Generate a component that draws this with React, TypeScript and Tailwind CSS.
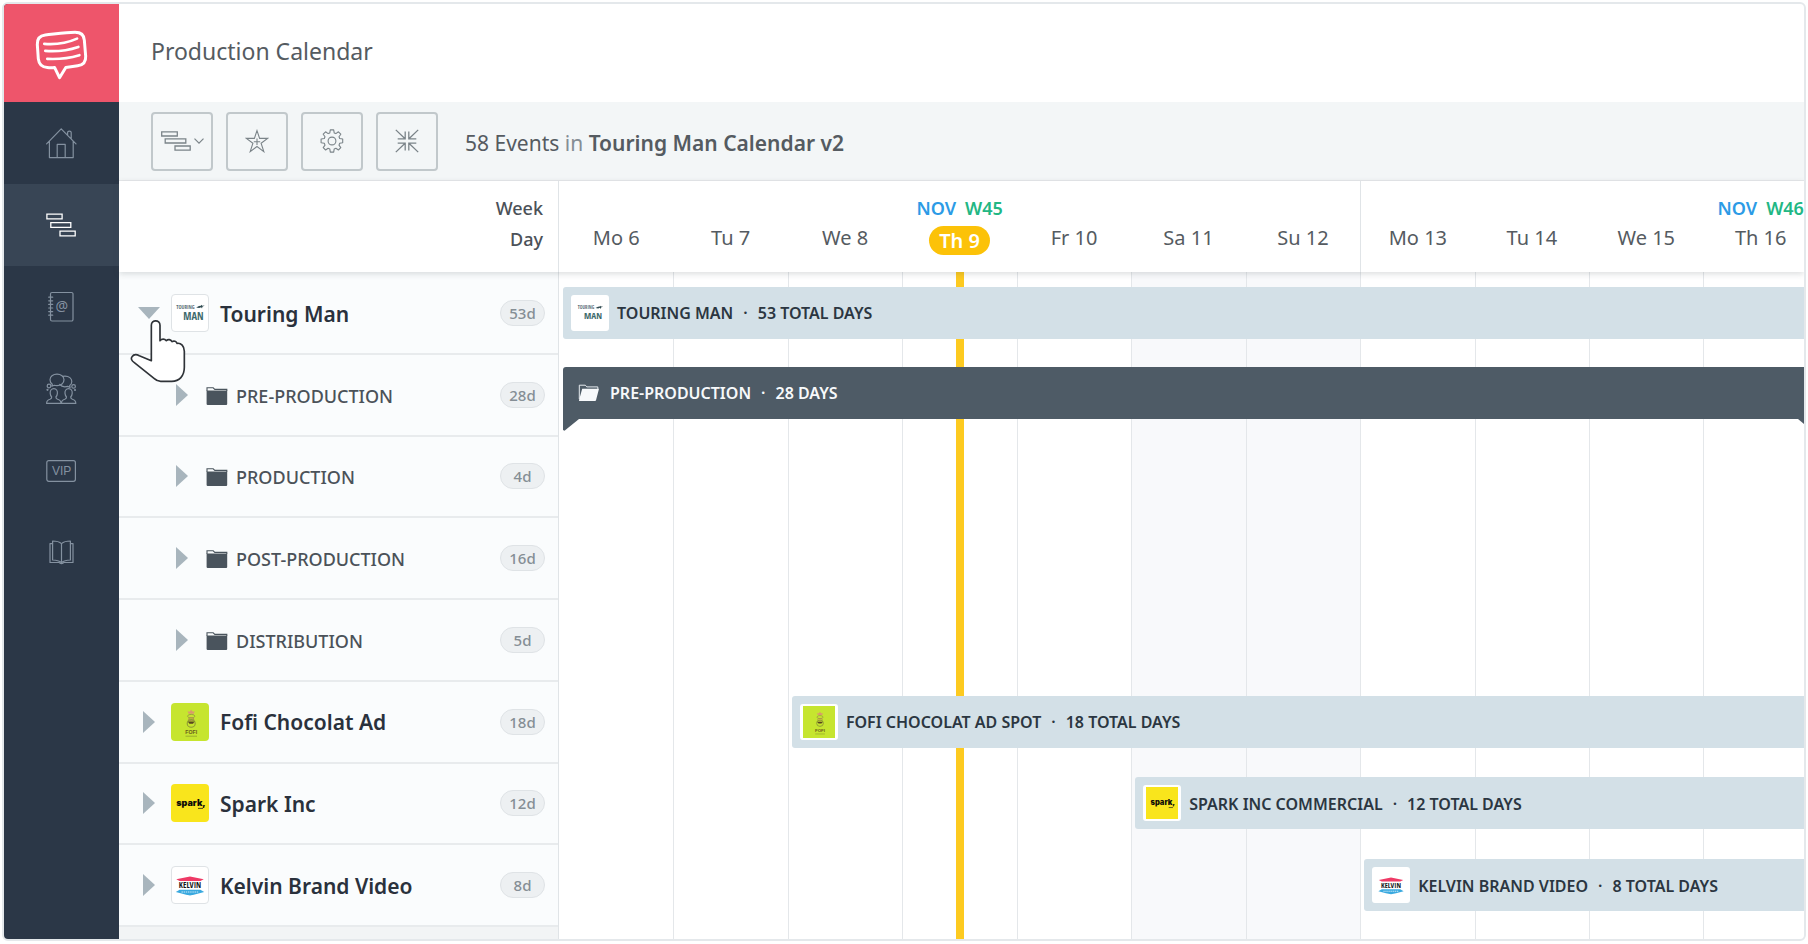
import type { ReactNode } from 'react';

type Brand = 'touring' | 'fofi' | 'spark' | 'kelvin';

const NARROW = '"Liberation Sans Narrow", "Open Sans Condensed", "Roboto Condensed", "DejaVu Sans Condensed", sans-serif';

const days = ['Mo 6', 'Tu 7', 'We 8', 'Th 9', 'Fr 10', 'Sa 11', 'Su 12', 'Mo 13', 'Tu 14', 'We 15', 'Th 16'];
const weeks: Record<string, string> = { 'Th 9': 'W45', 'Th 16': 'W46' };
const today = 'Th 9';

const rows: { name: string; total: string; brand?: Brand; open?: boolean }[] = [
  { name: 'Touring Man', total: '53d', brand: 'touring', open: true },
  { name: 'PRE-PRODUCTION', total: '28d' },
  { name: 'PRODUCTION', total: '4d' },
  { name: 'POST-PRODUCTION', total: '16d' },
  { name: 'DISTRIBUTION', total: '5d' },
  { name: 'Fofi Chocolat Ad', total: '18d', brand: 'fofi' },
  { name: 'Spark Inc', total: '12d', brand: 'spark' },
  { name: 'Kelvin Brand Video', total: '8d', brand: 'kelvin' },
];

function BrandArt({ brand }: { brand: Brand }) {
  if (brand === 'touring') {
    return (
      <svg viewBox="0 0 38 38" className="size-full" aria-hidden="true">
        <path d="M25.500 13.200l3-1.600 2-.2.600-1 .8 1 2.600-.2-2.400 1.200-.4 1.800-1-1.400-2 .8z" fill="#2f4a50" />
        <text x="4.500" y="14.500" fontFamily={NARROW} fontWeight="700" fontSize="5.500" fill="#5d7078">TOURING</text>
        <text x="12" y="26.500" fontFamily={NARROW} fontWeight="700" fontSize="11" fill="#3d6a6c">MAN</text>
      </svg>
    );
  }
  if (brand === 'fofi') {
    return (
      <svg viewBox="0 0 38 38" className="size-full" aria-hidden="true">
        <rect width="38" height="38" fill="#c6e52f" />
        <path d="M16.5 8.2l2 .6 1.7-2 1.6 2 2-.6-1 2.6h-5.2z" fill="#d99a6c" />
        <ellipse cx="20.2" cy="13.2" rx="3.6" ry="1.8" fill="none" stroke="#9aa53c" strokeWidth="1" />
        <ellipse cx="20.2" cy="16.2" rx="2.6" ry="1.5" fill="none" stroke="#b58a50" strokeWidth="1" />
        <ellipse cx="20.2" cy="20.4" rx="4" ry="3.8" fill="none" stroke="#8f9a36" strokeWidth="1.1" />
        <path d="M16.8 18.6h6.8l-1.6 2.2h-3.6z" fill="#57451f" />
        <text x="20.2" y="31" textAnchor="middle" fontFamily='"Liberation Sans", sans-serif' fontWeight="700" fontSize="5.2" fill="#6a5a1c">FOFI</text>
        <path d="M14.5 33.2h11.5" stroke="#8d9a2c" strokeWidth=".7" />
      </svg>
    );
  }
  if (brand === 'spark') {
    return (
      <svg viewBox="0 0 38 38" className="size-full" aria-hidden="true">
        <rect width="38" height="38" fill="#f9e51c" />
        <text x="20" y="21.5" textAnchor="middle" fontFamily='"Inter", "Liberation Sans", sans-serif' fontWeight="900" fontSize="9" fill="#0c0c08">spark,</text>
        <path d="M27 24.4h5" stroke="#4f4a12" strokeWidth="1" />
      </svg>
    );
  }
  return (
    <svg viewBox="0 0 38 38" className="size-full" aria-hidden="true">
      <path d="M19 10l14.5 3-3.5 1.7H8L4.5 13z" fill="#ef3a66" />
      <text x="19" y="22.4" textAnchor="middle" fontFamily={NARROW} fontWeight="700" fontSize="8.6" fill="#14161a">KELVIN</text>
      <path d="M8 24h22l4 2.4-9 2.4-6 1.2-6-1.2-9-2.4z" fill="#3aa9df" />
      <path d="M10 26.4h18" stroke="#cdeaf8" strokeWidth="1.2" strokeDasharray="1.5 .8" />
    </svg>
  );
}

function ScheduleIcon() {
  return (
    <svg width="30" height="24" viewBox="0 0 30 24" fill="none" stroke="currentColor" strokeWidth="1.3" aria-hidden="true">
      <path d="M.9 1.2h15.2v4.6H.9zM4.8 9.7h20v4.6h-20zM14 18.2h15.2v4.6H14z" />
    </svg>
  );
}

function Line({ children }: { children: ReactNode }) {
  return (
    <svg width="32" height="32" viewBox="0 0 32 32" fill="none" stroke="currentColor" strokeWidth="1.2" strokeLinejoin="round" strokeLinecap="round" aria-hidden="true">
      {children}
    </svg>
  );
}

function PersonPath({ x }: { x: number }) {
  return (
    <path
      transform={`translate(${x} 0)`}
      d="M0 30.4h14.4c0-3-1.400-3.600-3.400-4.200-1.400-.5-1.700-1-1.700-2.200 1-1 1.400-2.300 1.500-3.600.3-2.800-1.100-4.700-3.600-4.700s-3.900 1.900-3.600 4.700c.1 1.300.5 2.600 1.500 3.600 0 1.200-.3 1.700-1.700 2.200-2 .6-3.400 1.200-3.400 4.200z"
    />
  );
}

const nav: { label: string; icon: ReactNode; active?: boolean }[] = [
  {
    label: 'Home',
    icon: (
      <Line>
        <path d="M1.600 16.800L16.200 1.800l14.800 15M4.400 14.200v16.400h23.800V14.200M12.200 30.600V17.400h8v13.200M22.600 8.200V5.600c0-2 3.600-2 3.600 0v6" />
      </Line>
    ),
  },
  { label: 'Calendar', icon: <ScheduleIcon />, active: true },
  {
    label: 'Contacts',
    icon: (
      <Line>
        <path d="M5.500 4V3a1.500 1.500 0 0 1 1.500-1.500h19.500A1.500 1.500 0 0 1 28 3v25.500a1.500 1.500 0 0 1-1.500 1.500H7a1.500 1.500 0 0 1-1.500-1.500v-1M5.500 4v23.500" />
        <path d="M3.700 6.200h4M3.700 9.800h4M3.700 13.400h4M3.700 17h4M3.700 20.600h4M3.700 24.200h4" />
        <text x="16.700" y="19.800" textAnchor="middle" fontFamily='"Noto Sans", sans-serif' fontSize="14" fill="currentColor" stroke="none">@</text>
      </Line>
    ),
  },
  {
    label: 'Team',
    icon: (
      <Line>
        <path d="M12 1.200c-4 0-7 2.400-7 5.600 0 1.800.9 3.400 2.300 4.400l-.5 2 2.500-.9c.8.300 1.700.4 2.700.4 4 0 7-2.500 7-5.900s-3-5.600-7-5.600z" />
        <path d="M17.800 3.400c.7-.2 1.400-.3 2.200-.3 4 0 6.800 2.300 6.800 5.300 0 1.700-.8 3.100-2.100 4.100l.4 2-2.400-1.100c-3.200.8-6.600-.2-8-2" />
        <circle cx="4" cy="13" r="1.800" />
        <circle cx="28.600" cy="13.400" r="1.800" />
        <circle cx="2.500" cy="16.800" r=".5" />
        <circle cx="30" cy="17" r=".5" />
        <PersonPath x={1.600} />
        <PersonPath x={16.400} />
      </Line>
    ),
  },
  {
    label: 'VIP',
    icon: (
      <Line>
        <rect x="1.800" y="5.700" width="28.600" height="20.600" rx="2" />
        <text x="16.600" y="20.300" textAnchor="middle" fontFamily='"Liberation Sans", sans-serif' fontSize="12" fill="currentColor" stroke="none">VIP</text>
      </Line>
    ),
  },
  {
    label: 'Library',
    icon: (
      <Line>
        <path d="M16.500 6.600C14 4.400 11 4 7.600 4v19c3.400 0 6.400.5 8.900 2.700 2.500-2.200 5.500-2.700 8.900-2.700V4c-3.400 0-6.400.4-8.900 2.600zM16.500 6.600v19.100" />
        <path d="M7.600 6.600H5v18.900h9.400c.4 1.400 3.800 1.400 4.200 0H28V6.600h-2.600" />
      </Line>
    ),
  },
];

const tools: { label: string; icon: ReactNode }[] = [
  {
    label: 'View',
    icon: (
      <span className="flex items-center gap-[3px]">
        <svg width="30" height="20" viewBox="0 0 30 20" fill="none" stroke="currentColor" strokeWidth="1.3" aria-hidden="true">
          <path d="M.7.8h15.600v4.200H.7zM4.200 7.800h20.600V12H4.200zM14 15h15.200v4.200H14z" />
        </svg>
        <svg width="10" height="6" viewBox="0 0 10 6" fill="none" stroke="currentColor" strokeWidth="1.200" aria-hidden="true">
          <path d="M.5.6L5 5.100 9.500.6" />
        </svg>
      </span>
    ),
  },
  {
    label: 'Add to favorites',
    icon: (
      <svg width="24" height="24" viewBox="0 0 24 24" fill="none" stroke="currentColor" strokeWidth="1.100" aria-hidden="true">
        <path d="M12 1.600l2.600 7.800h8l-6.500 4.800 2.700 8.400L12 17.500l-6.800 5.100 2.700-8.400L1.400 9.400h8zM12 9.500v6.500M8.800 12.700h6.400" />
      </svg>
    ),
  },
  {
    label: 'Settings',
    icon: (
      <svg width="24" height="24" viewBox="0 0 24 24" fill="none" stroke="currentColor" strokeWidth="1.100" strokeLinejoin="round" aria-hidden="true">
        <circle cx="12" cy="12" r="3.900" />
        <path d="M10.300.9h3.400l.5 3 1.700.7 2.500-1.800 2.400 2.400-1.800 2.500.7 1.800 3 .5v3.800l-3 .5-.7 1.800 1.800 2.500-2.400 2.400-2.500-1.800-1.700.7-.5 3.200h-3.400l-.5-3.200-1.700-.7-2.500 1.800-2.400-2.400L5 16.100l-.7-1.800-3.200-.5V10l3.200-.5L5 7.700 3.200 5.200l2.400-2.400 2.500 1.800 1.700-.7z" />
      </svg>
    ),
  },
  {
    label: 'Collapse',
    icon: (
      <svg width="24" height="24" viewBox="0 0 24 24" fill="none" stroke="currentColor" strokeWidth="1.300" aria-hidden="true">
        <path d="M.8.900l9 8.600M10.200 2.600v7.200H2.700M23.200.900l-9 8.600M13.800 2.600v7.200h7.500M.8 23.100l9-8.600M10.200 21.400v-7.200H2.700M23.200 23.100l-9-8.600M13.800 21.400v-7.200h7.500" />
      </svg>
    ),
  },
];

function Bar({ brand, title, detail, className }: { brand: Brand; title: string; detail: string; className: string }) {
  return (
    <div className={`ml-1 flex h-[52px] items-center rounded-l-[3px] bg-[#d3e0e7] pl-2 text-[16px] font-semibold whitespace-nowrap text-[#2b3641] ${className}`}>
      <span className="h-9 w-[38px] overflow-hidden rounded-[3px] border-2 border-white bg-white">
        <BrandArt brand={brand} />
      </span>
      <span className="flex gap-[10px] pt-px pl-2">
        <span>{title}</span>
        <span>·</span>
        <span>{detail}</span>
      </span>
    </div>
  );
}

function Folder() {
  return (
    <svg width="22" height="20" viewBox="0 0 22 20" aria-hidden="true">
      <path d="M1 5V1.800h6.200L8.800 3.400h12V5" fill="none" stroke="#4a545d" strokeWidth="1.100" />
      <path d="M.6 4.600h20.600V18a1 1 0 0 1-1 1H1.600a1 1 0 0 1-1-1z" fill="#4a545d" />
    </svg>
  );
}

function Pointer() {
  return (
    <svg className="pointer-events-none absolute top-[17px] left-[-8px] z-20" width="57" height="65" viewBox="390 170 171 195" aria-hidden="true">
      <path
        d="M454 298V192c0-18 26-18 26 0v46c5-6 14-6 19 0 5-5 13-4 17 3 6-4 13-1 15 5 12-2 22 8 22 24v48c0 26-15 42-38 42h-33c-8 0-14-3-19-8l-60-48c-9-6-11-13-7-18 5-7 14-7 22-3z"
        fill="#fff"
        stroke="#2f3338"
        strokeWidth="5"
        strokeLinejoin="round"
      />
    </svg>
  );
}

function Toggle({ open, name }: { open?: boolean; name: string }) {
  return (
    <button type="button" aria-expanded={!!open} aria-label={`Toggle ${name}`} className="relative flex h-6 w-[22px] items-center justify-center text-[#a8b5bd]">
      {open ? (
        <svg width="22" height="12" viewBox="0 0 22 12" aria-hidden="true">
          <path d="M0 0h22L11 12z" fill="currentColor" />
        </svg>
      ) : (
        <svg width="12" height="22" viewBox="0 0 12 22" aria-hidden="true">
          <path d="M0 0v22l12-11z" fill="currentColor" />
        </svg>
      )}
      {open && <Pointer />}
    </button>
  );
}

export default function App() {
  return (
    <div className="flex min-h-screen bg-white px-[2px] pt-[2px] pb-[3px] font-['Noto_Sans','Open_Sans',sans-serif] text-[#555b61]">
      <div className="flex min-w-0 flex-1 overflow-hidden rounded-[6px] border-2 border-[#e4e8eb]">
        <aside className="flex w-[115px] shrink-0 flex-col bg-[#2b3747]">
          <a href="#top" aria-label="Dashboard" className="flex h-[98px] items-center justify-center bg-[#ee556b] pt-[3px] pr-px">
            <svg width="55" height="52" viewBox="100 85 166 157" fill="none" stroke="#fff" strokeWidth="9" strokeLinejoin="round" strokeLinecap="round" aria-hidden="true">
              <path d="M134 103c30-3 62-8 90-8 18 0 27 7 28 24l4 48c1 17-7 27-24 29l-36 5-19 31-15-31c-8 1-14 1-22 0-17-1-25-9-27-26l-3-43c-1-17 7-27 24-29z" />
              <path d="M131 130c36 3 72-4 99-16M134 151c36 3 70-2 100-12M140 175c34 2 66-2 97-11" strokeWidth="8" />
            </svg>
          </a>
          <nav className="flex flex-col">
            {nav.map((item) => (
              <a
                key={item.label}
                href={`#${item.label.toLowerCase()}`}
                aria-label={item.label}
                className={`flex h-[82px] items-center justify-center pr-px ${item.active ? 'bg-[#384555] text-white' : 'text-[#8491a0]'}`}
              >
                {item.icon}
              </a>
            ))}
          </nav>
        </aside>

        <main className="flex min-w-0 flex-1 flex-col">
          <header className="flex h-[98px] items-center pb-1 pl-8">
            <h1 className="text-[23px]">Production Calendar</h1>
          </header>

          <div className="flex h-[79px] items-center border-b border-[#e6e8ea] bg-[#f3f6f7] pl-8">
            <div className="flex gap-[13px]">
              {tools.map((tool) => (
                <button
                  key={tool.label}
                  type="button"
                  aria-label={tool.label}
                  className="flex h-[59px] w-[62px] items-center justify-center rounded-[4px] border-2 border-[#c1c8cb] text-[#7b8489]"
                >
                  {tool.icon}
                </button>
              ))}
            </div>
            <p className="ml-[27px] pt-[6px] text-[21px]">
              58 Events <span className="text-[#858d94]">in</span> <strong className="font-semibold">Touring Man Calendar v2</strong>
            </p>
          </div>

          <div className="relative z-10 flex h-[91px] bg-white shadow-[0_2px_6px_rgba(60,70,80,0.18)]">
            <div className="flex w-[440px] shrink-0 flex-col items-end border-r border-[#e0e4e7] pt-3 pr-[15px] text-[18px] leading-[31px] font-medium text-[#4b5158]">
              <span>Week</span>
              <span>Day</span>
            </div>
            <div className="min-w-0 flex-1 overflow-hidden">
              <div className="grid h-full w-[101.12%] grid-cols-11">
                {days.map((day) => (
                  <div
                    key={day}
                    className={`flex flex-col items-center pt-3 whitespace-nowrap ${day === 'Mo 13' ? 'border-l border-[#e0e4e7]' : ''}`}
                  >
                    <div className="flex h-[31px] items-center gap-[9px] text-[18px] font-semibold">
                      {weeks[day] && (
                        <>
                          <span className="text-[#2c9be6]">NOV</span>
                          <span className="text-[#22b784]">{weeks[day]}</span>
                        </>
                      )}
                    </div>
                    {day === today ? (
                      <span className="mt-[2px] rounded-full bg-[#fcc208] px-[10px] text-[20px] leading-[29px] font-semibold text-white">{day}</span>
                    ) : (
                      <span className="text-[20px] leading-[27px]">{day}</span>
                    )}
                  </div>
                ))}
              </div>
            </div>
          </div>

          <div className="flex flex-1">
            <div className="flex w-[440px] shrink-0 flex-col border-r border-[#e0e4e7] bg-[#f2f4f5] pb-3">
              <ul className="grid flex-1 auto-rows-fr bg-[#fafcfd] pt-px">
                {rows.map((row) => (
                  <li
                    key={row.name}
                    className={`flex min-h-16 items-center border-b-2 border-[#e8ebed] pr-[13px] ${row.brand ? 'pl-[19px]' : 'pl-[52px]'}`}
                  >
                    <Toggle open={row.open} name={row.name} />
                    {row.brand ? (
                      <>
                        <span
                          className={`ml-[11px] size-[38px] overflow-hidden rounded-[4px] ${row.brand === 'touring' || row.brand === 'kelvin' ? 'border border-[#dfe3e6] bg-white' : ''}`}
                        >
                          <BrandArt brand={row.brand} />
                        </span>
                        <span className="ml-[11px] flex-1 pt-[3px] text-[21px] font-semibold text-[#2a313c]">{row.name}</span>
                      </>
                    ) : (
                      <>
                        <span className="ml-[13px] pt-[2px]">
                          <Folder />
                        </span>
                        <span className="ml-2 flex-1 pt-[3px] text-[18px] font-medium text-[#4b5259]">{row.name}</span>
                      </>
                    )}
                    <span className="w-[45px] rounded-full border border-[#dfe3e6] bg-[#edf0f2] text-center text-[15px] leading-6 font-medium text-[#858e95]">
                      {row.total}
                    </span>
                  </li>
                ))}
              </ul>
            </div>

            <div className="grid min-w-0 flex-1 overflow-hidden">
              <div className="grid w-[101.12%] grid-cols-11 [grid-area:1/1]" aria-hidden="true">
                {days.map((day) => (
                  <div
                    key={day}
                    className={`flex justify-center border-l border-[#e4e7ea] first:border-l-0 ${day.startsWith('S') ? 'bg-[#f8f9fb]' : ''}`}
                  >
                    {day === today && <span className="w-2 bg-[#fdca20]" />}
                  </div>
                ))}
              </div>
              <div className="grid w-[101.12%] auto-rows-fr pb-[13px] [grid-area:1/1]">
                <div className="grid grid-cols-11 items-center">
                  <Bar brand="touring" title="TOURING MAN" detail="53 TOTAL DAYS" className="col-span-11" />
                </div>
                <div className="grid grid-cols-11 items-center pb-1">
                  <div className="relative col-span-11 mx-1 flex h-[52px] items-center rounded-t-[3px] bg-[#4e5b66] pl-[15px] text-[16px] font-semibold whitespace-nowrap text-[#f7f9fb]">
                    <svg width="22" height="18" viewBox="0 0 22 18" aria-hidden="true">
                      <path d="M1.300 15V1.200h6l1.500 1.700h11v2" fill="none" stroke="#e6ebef" strokeWidth="1" />
                      <path d="M4.200 4.800H21L18 16.200a1 1 0 0 1-1 .8H1.600a.6.600 0 0 1-.6-.8z" fill="#f7f9fb" />
                    </svg>
                    <span className="flex gap-[10px] pt-px pl-[10px]">
                      <span>PRE-PRODUCTION</span>
                      <span>·</span>
                      <span>28 DAYS</span>
                    </span>
                    <svg className="absolute top-full left-0" width="16" height="12" viewBox="0 0 16 12" aria-hidden="true">
                      <path d="M0 0h16L1.500 11.800 0 11z" fill="#4e5b66" />
                    </svg>
                    <svg className="absolute top-full right-0" width="16" height="12" viewBox="0 0 16 12" aria-hidden="true">
                      <path d="M16 0H0l14.500 11.800L16 11z" fill="#4e5b66" />
                    </svg>
                  </div>
                </div>
                <div />
                <div />
                <div />
                <div className="grid grid-cols-11 items-center">
                  <Bar brand="fofi" title="FOFI CHOCOLAT AD SPOT" detail="18 TOTAL DAYS" className="col-span-9 col-start-3" />
                </div>
                <div className="grid grid-cols-11 items-center">
                  <Bar brand="spark" title="SPARK INC COMMERCIAL" detail="12 TOTAL DAYS" className="col-span-6 col-start-6" />
                </div>
                <div className="grid grid-cols-11 items-center">
                  <Bar brand="kelvin" title="KELVIN BRAND VIDEO" detail="8 TOTAL DAYS" className="col-span-4 col-start-8" />
                </div>
              </div>
            </div>
          </div>
        </main>
      </div>
    </div>
  );
}
